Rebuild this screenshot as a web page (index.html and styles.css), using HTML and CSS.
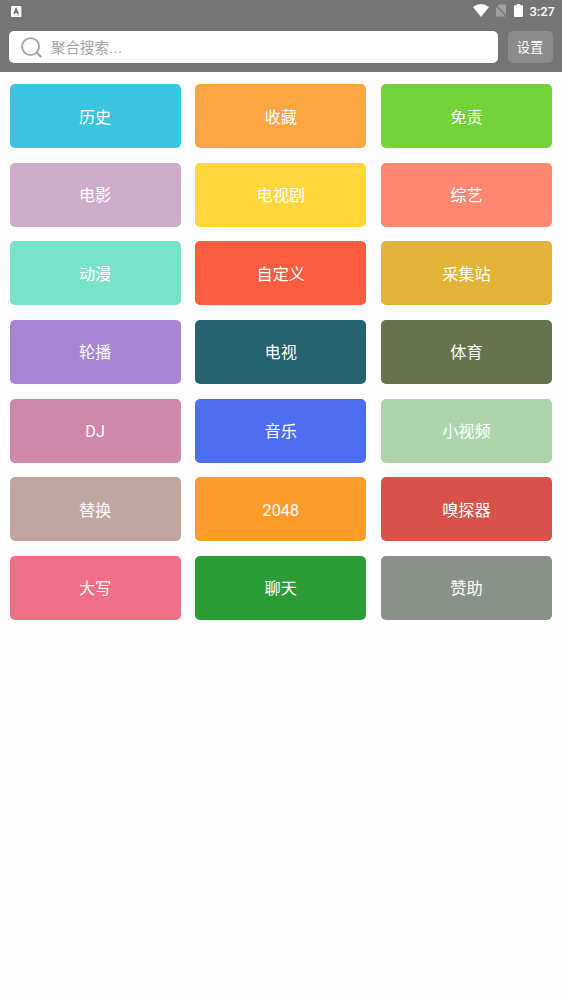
FILE: index.html
```html
<!DOCTYPE html>
<html lang="zh-CN">

<head>
  <meta charset="UTF-8" />
  <meta name="viewport" content="width=device-width, initial-scale=1.0" />
  <title>聚合搜索</title>
  <link rel="stylesheet" href="styles.css">
</head>

<body>
  <header class="header">
    <div class="status-bar">
      <svg class="icon-app" width="11" height="11" viewBox="0 0 11 11">
        <rect width="10.4" height="11" rx="1" fill="#fff" />
        <path d="M2.9 8 L5.1 2.8 L7.3 8 M3.7 6.4 H6.5" fill="none" stroke="#666" stroke-width="1.4" />
        <path d="M6.3 9.2 H8.3" stroke="#999" stroke-width="0.8" />
      </svg>
      <div class="status-right">
        <svg class="icon-wifi" width="16" height="13" viewBox="0 0 16 13">
          <path d="M0 3 Q8 -3 16 3 L8 13 Z" fill="#fff" />
        </svg>
        <svg class="icon-sim" width="12" height="13" viewBox="0 0 12 13">
          <path d="M4 0.5 H10 Q11 0.5 11 1.5 V12.5 H1 V3.5 Z" fill="#a0a0a0" />
          <path d="M0.6 1 L11.6 12.6" stroke="#757575" stroke-width="1.3" />
        </svg>
        <svg class="icon-battery" width="9" height="13" viewBox="0 0 9 13">
          <path d="M2.7 0 H6.3 V1.3 H8 Q9 1.3 9 2.3 V12 Q9 13 8 13 H1 Q0 13 0 12 V2.3 Q0 1.3 1 1.3 H2.7 Z" fill="#fff" />
        </svg>
        <span class="time">3:27</span>
      </div>
    </div>
    <div class="search-bar">
      <div class="search-box">
        <svg width="21" height="21" viewBox="0 0 21 21" fill="none" stroke="#a3a3a3" stroke-width="1.9">
          <circle cx="9.6" cy="9.6" r="8.5" />
          <path d="M15.4 15.2 L20.2 20" stroke-width="2.1" />
        </svg>
        <span>聚合搜索<i>...</i></span>
      </div>
      <button class="setting">设置</button>
    </div>
  </header>

  <main class="menu">
    <a class="item history">历史</a>
    <a class="item favorite">收藏</a>
    <a class="item disclaimer">免责</a>
    <a class="item movie">电影</a>
    <a class="item series">电视剧</a>
    <a class="item variety">综艺</a>
    <a class="item anime">动漫</a>
    <a class="item custom">自定义</a>
    <a class="item collect">采集站</a>
    <a class="item carousel">轮播</a>
    <a class="item tv">电视</a>
    <a class="item sport">体育</a>
    <a class="item latin dj">DJ</a>
    <a class="item music">音乐</a>
    <a class="item short-video">小视频</a>
    <a class="item replace">替换</a>
    <a class="item latin game">2048</a>
    <a class="item sniffer">嗅探器</a>
    <a class="item upper">大写</a>
    <a class="item chat">聊天</a>
    <a class="item sponsor">赞助</a>
  </main>
</body>

</html>
```
FILE: styles.css
```css
body {
  font-family: Roboto, "Noto Sans CJK SC", sans-serif;
  background-color: #fefefe;
  margin: 0;
  padding: 0;
}

.header {
  height: 72px;
  background-color: #757575;
}

.status-bar {
  display: flex;
  justify-content: space-between;
  align-items: center;
  height: 22px;
  padding: 0 7px 0 11px;
}

.status-right {
  display: flex;
  align-items: center;
}

.status-right svg {
  margin-bottom: 1px;
}

.icon-wifi {
  margin-right: 6px;
}

.icon-sim {
  margin-right: 7px;
}

.icon-battery {
  margin-right: 6px;
}

.time {
  color: #fff;
  font-size: 13px;
  font-weight: 500;
  line-height: 22px;
  padding-top: 1px;
}

.search-bar {
  display: flex;
  gap: 10px;
  padding: 9px 9px 0;
}

.search-box {
  flex: 1;
  display: flex;
  align-items: center;
  gap: 9px;
  height: 32px;
  padding-left: 12px;
  box-sizing: border-box;
  border-radius: 5px;
  background-color: #fff;
  color: #a3a3a3;
  font-size: 14.4px;
}

.search-box svg {
  margin-top: 1px;
}

.search-box span {
  padding-bottom: 2px;
  letter-spacing: 0.1px;
}

.search-box i {
  font-style: normal;
  letter-spacing: 0.8px;
}

.setting {
  width: 45px;
  height: 32px;
  padding: 0 1px 2px 0;
  border: none;
  border-radius: 5px;
  background-color: #8b8b8b;
  color: #fff;
  font-family: inherit;
  font-size: 13.3px;
}

.menu {
  display: grid;
  grid-template-columns: repeat(3, 1fr);
  grid-auto-rows: 64px;
  gap: 14.65px;
  padding: 12px 10px 12px 9.6px;
}

.item {
  display: flex;
  justify-content: center;
  align-items: center;
  box-sizing: border-box;
  padding-bottom: 1px;
  border-radius: 5px;
  color: #fff;
  font-size: 16.2px;
}

.latin {
  padding-top: 2px;
  padding-bottom: 0;
}

.history { background-color: #3bc4df; }
.favorite { background-color: #fba545; }
.disclaimer { background-color: #73d13a; }
.movie { background-color: #cdabca; }
.series { background-color: #ffd63c; }
.variety { background-color: #fd8770; }
.anime { background-color: #75e4cb; }
.custom { background-color: #f95c3f; }
.collect { background-color: #e1b338; }
.carousel { background-color: #a984d3; }
.tv { background-color: #26626f; }
.sport { background-color: #67734d; }
.dj { background-color: #cd88aa; }
.music { background-color: #4e6ef2; }
.short-video { background-color: #aed4ac; }
.replace { background-color: #c1a6a0; }
.game { background-color: #ff9b2b; }
.sniffer { background-color: #d95249; }
.upper { background-color: #ef6f86; }
.chat { background-color: #2c9c36; }
.sponsor { background-color: #889288; }
```
